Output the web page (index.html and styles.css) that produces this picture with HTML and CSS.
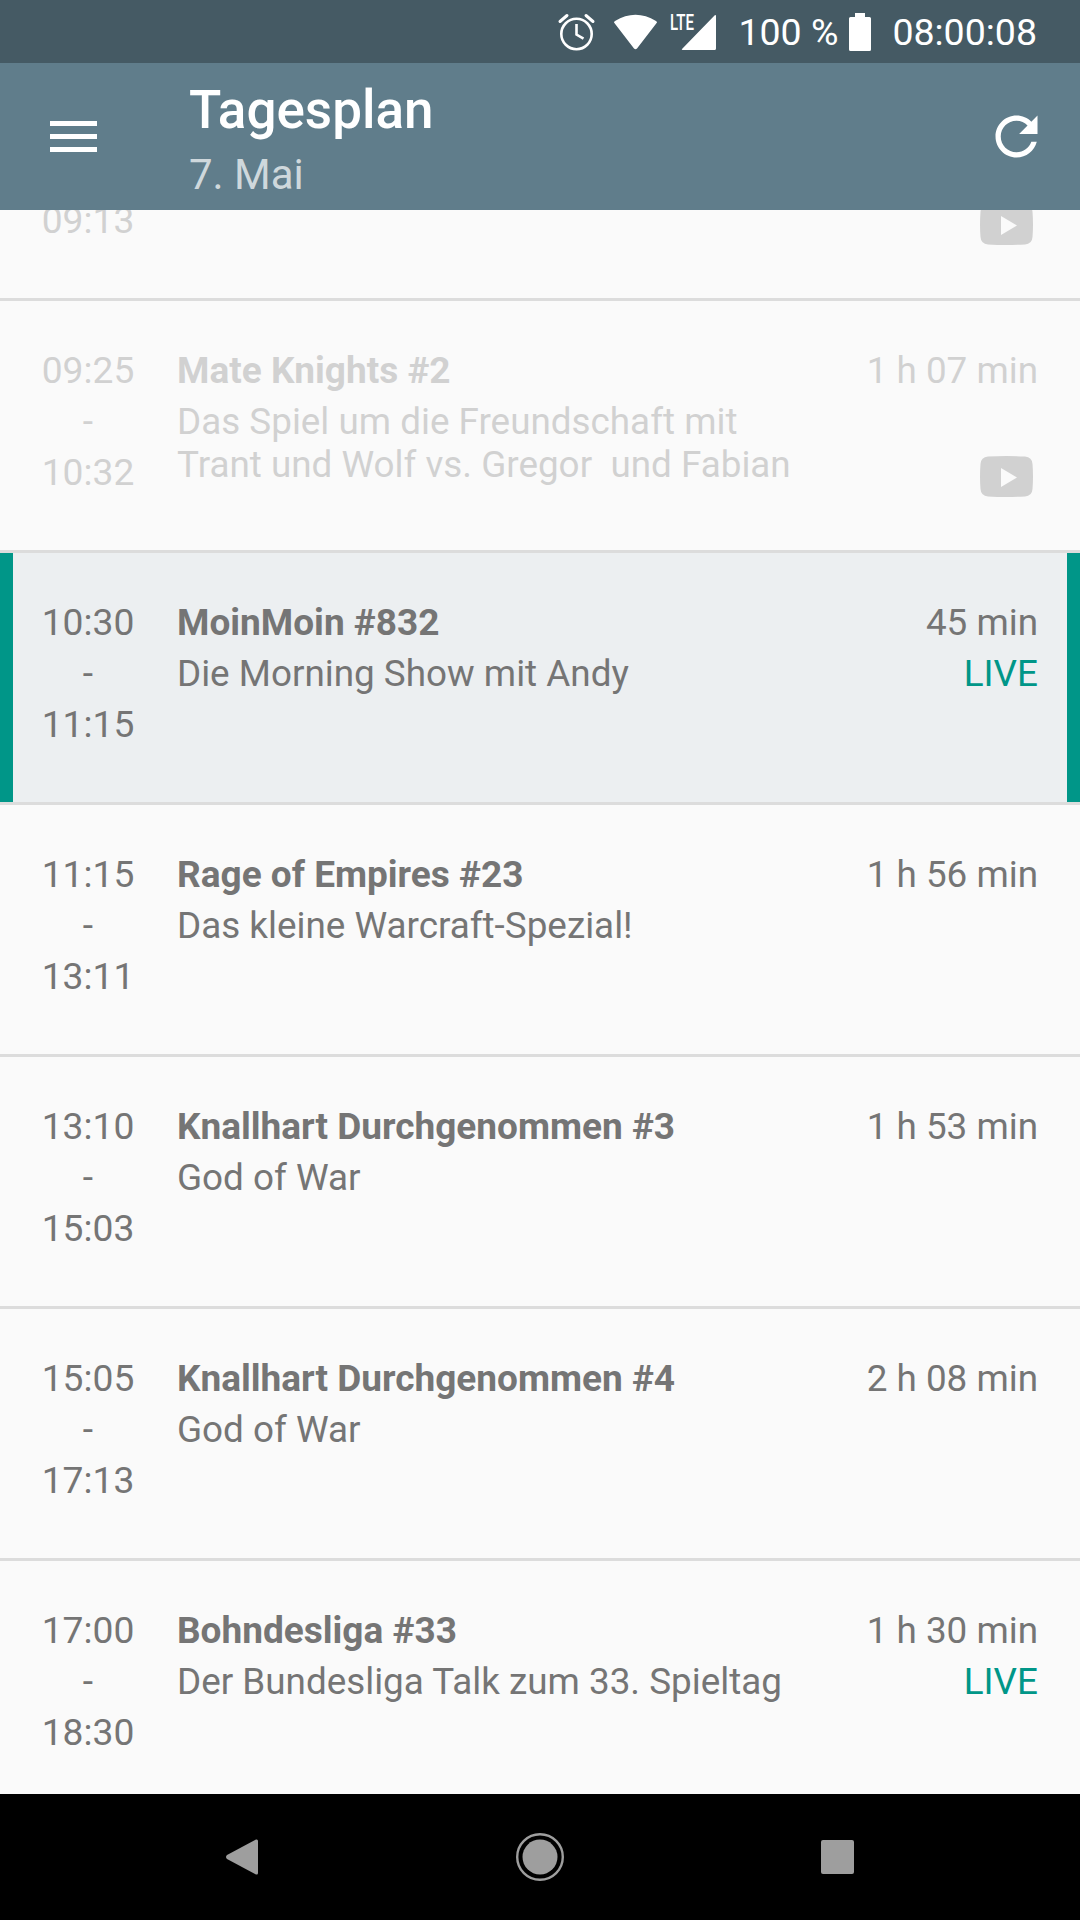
FILE: index.html
```html
<!DOCTYPE html>
<html lang="de">
<head>
  <meta charset="UTF-8">
  <meta name="viewport" content="width=device-width, initial-scale=1.0">
  <title>Tagesplan</title>
  <link rel="stylesheet" href="styles.css">
</head>
<body>
<div class="screen">
  <!-- status bar -->
  <div class="statusbar">
    <svg class="ic-alarm" width="37" height="38" viewBox="0 0 37 38">
      <circle cx="18.5" cy="21" r="15.2" fill="none" stroke="#fff" stroke-width="2.6"/>
      <path d="M18.5 11v10.5l7 4.2" fill="none" stroke="#fff" stroke-width="2.6"/>
      <path d="M2 8.5 9 2.5M35 8.5 28 2.5" fill="none" stroke="#fff" stroke-width="3" stroke-linecap="round"/>
    </svg>
    <svg class="ic-wifi" width="45" height="37" viewBox="0 0 45 37">
      <path d="M1 9.500Q1 8.500 2 8 22.500-4.500 43 8 44 8.500 44 9.500L24 35.500Q22.500 37 21 35.500Z" fill="#fff"/>
    </svg>
    <svg class="ic-signal" width="46" height="37" viewBox="0 0 46 37">
      <text class="lte" x="0" y="17" textLength="24" lengthAdjust="spacingAndGlyphs">LTE</text>
      <path d="M12 36 44.500 2.500Q46 1.500 46 3V35.500Q46 37 44.500 37H13Q11 37 12 36Z" fill="#fff"/>
    </svg>
    <span class="batt-text">100 %</span>
    <svg class="ic-batt" width="22" height="38" viewBox="0 0 22 38">
      <path d="M6 0h10v4h4.500Q22 4 22 5.500V36.500Q22 38 20.500 38H1.500Q0 38 0 36.500V5.500Q0 4 1.500 4H6Z" fill="#fff"/>
    </svg>
    <span class="clock">08:00:08</span>
  </div>

  <!-- app bar -->
  <header class="appbar">
    <div class="burger"><i></i><i></i><i></i></div>
    <div class="appbar-text">
      <h1>Tagesplan</h1>
      <p>7. Mai</p>
    </div>
    <svg class="ic-refresh" width="63" height="63" viewBox="0 0 24 24">
      <path fill="#fff" d="M17.65 6.35C16.2 4.9 14.21 4 12 4c-4.42 0-7.99 3.58-7.99 8s3.57 8 7.99 8c3.73 0 6.84-2.55 7.73-6h-2.08c-.82 2.33-3.04 4-5.65 4-3.31 0-6-2.69-6-6s2.69-6 6-6c1.66 0 3.14.69 4.22 1.78L13 11h7V4l-2.35 2.35z"/>
    </svg>
  </header>

  <!-- Sendungen -->
  <main class="list-wrap">
    <div class="list">
      <div class="row past first">
        <div class="times"><span>09:13</span></div>
        <div class="info"></div>
        <div class="side">
          <svg class="ic-play" width="53" height="41" viewBox="0 0 53 41"><path fill-rule="evenodd" d="M8 0.500Q26.500-.5 45 .5 52 1 52.500 8 53.500 20.500 52.500 33 52 40 45 40.500 26.500 41.500 8 40.500 1 40 .5 33-.5 20.500 .5 8 1 1 8 .5ZM21 12V31L37 21.500Z" fill="#757575"/></svg>
        </div>
      </div>

      <div class="row past">
        <div class="times"><span>09:25</span><span>-</span><span>10:32</span></div>
        <div class="info">
          <h2>Mate Knights #2</h2>
          <p>Das Spiel um die Freundschaft mit<br>Trant und Wolf vs. Gregor &nbsp;und Fabian</p>
        </div>
        <div class="side">
          <span>1 h 07 min</span>
          <svg class="ic-play" width="53" height="41" viewBox="0 0 53 41"><path fill-rule="evenodd" d="M8 0.500Q26.500-.5 45 .5 52 1 52.500 8 53.500 20.500 52.500 33 52 40 45 40.500 26.500 41.500 8 40.500 1 40 .5 33-.5 20.500 .5 8 1 1 8 .5ZM21 12V31L37 21.500Z" fill="#757575"/></svg>
        </div>
      </div>

      <div class="row current">
        <div class="times"><span>10:30</span><span>-</span><span>11:15</span></div>
        <div class="info">
          <h2>MoinMoin #832</h2>
          <p>Die Morning Show mit Andy</p>
        </div>
        <div class="side">
          <span>45 min</span>
          <span class="live">LIVE</span>
        </div>
      </div>

      <div class="row">
        <div class="times"><span>11:15</span><span>-</span><span>13:11</span></div>
        <div class="info">
          <h2>Rage of Empires #23</h2>
          <p>Das kleine Warcraft-Spezial!</p>
        </div>
        <div class="side"><span>1 h 56 min</span></div>
      </div>

      <div class="row">
        <div class="times"><span>13:10</span><span>-</span><span>15:03</span></div>
        <div class="info">
          <h2>Knallhart Durchgenommen #3</h2>
          <p>God of War</p>
        </div>
        <div class="side"><span>1 h 53 min</span></div>
      </div>

      <div class="row">
        <div class="times"><span>15:05</span><span>-</span><span>17:13</span></div>
        <div class="info">
          <h2>Knallhart Durchgenommen #4</h2>
          <p>God of War</p>
        </div>
        <div class="side"><span>2 h 08 min</span></div>
      </div>

      <div class="row">
        <div class="times"><span>17:00</span><span>-</span><span>18:30</span></div>
        <div class="info">
          <h2>Bohndesliga #33</h2>
          <p>Der Bundesliga Talk zum 33. Spieltag</p>
        </div>
        <div class="side">
          <span>1 h 30 min</span>
          <span class="live">LIVE</span>
        </div>
      </div>
    </div>
  </main>

  <!-- android nav -->
  <nav class="navbar">
    <svg width="33" height="36" viewBox="0 0 33 36"><path d="M1 16 30 .5Q32 0 32 2V34Q32 36 30 35.500L1 20Q-1 18 1 16Z" fill="#9e9e9e"/></svg>
    <svg width="48" height="48" viewBox="0 0 48 48"><circle cx="24" cy="24" r="22.800" fill="none" stroke="#9e9e9e" stroke-width="2.400"/><circle cx="24" cy="24" r="17.500" fill="#9e9e9e"/></svg>
    <div class="recent"></div>
  </nav>
</div>
</body>
</html>
```

FILE: styles.css
```css
html,
body {
  margin: 0;
  padding: 0;
  overflow: hidden;
}

body {
  background: #fafafa;
  color: #757575;
  font: 36.85px/51px Roboto, "Liberation Sans", sans-serif;
}

h1,
h2,
p {
  margin: 0;
  padding: 0;
}

.screen {
  width: 1080px;
  height: 1920px;
  display: flex;
  flex-direction: column;
}

/* status bar */
.statusbar {
  height: 63px;
  flex: none;
  background: #455a64;
  color: #fff;
  display: flex;
  justify-content: flex-end;
  align-items: center;
  padding-right: 43px;
  font-size: 37.5px;
}

.statusbar svg {
  flex: none;
  overflow: visible;
}

.statusbar span {
  padding-top: 2px;
}

.ic-alarm {
  margin-right: 18px;
}

.ic-wifi {
  margin-right: 12px;
}

.lte {
  fill: #fff;
  font: 500 22.5px Roboto, sans-serif;
}

.batt-text {
  margin: 0 11px 0 22px;
}

.clock {
  margin-left: 21px;
}

/* app bar */
.appbar {
  height: 147px;
  flex: none;
  background: #607d8b;
  display: flex;
  align-items: center;
  color: #fff;
  position: relative;
  z-index: 1;
}

.burger {
  width: 47px;
  margin-left: 50px;
  display: flex;
  flex-direction: column;
  gap: 8px;
}

.burger i {
  display: block;
  height: 5px;
  background: #fff;
}

.appbar-text {
  flex: 1;
  margin-left: 92px;
  padding-top: 6px;
}

.appbar-text h1 {
  font-size: 53px;
  line-height: 60px;
  font-weight: 500;
}

.appbar-text p {
  font-size: 42px;
  line-height: 50px;
  margin-top: 10px;
  color: #cfd8dc;
}

.ic-refresh {
  margin-right: 32px;
}

/* list */
.list-wrap {
  flex: 1;
  overflow: hidden;
}

.list {
  margin-top: -161px;
}

.row {
  box-sizing: border-box;
  height: 252px;
  border-bottom: 3px solid #dcdcdc;
  padding: 44px 42px 0 43px;
  display: flex;
}

.times {
  width: 90px;
  flex: none;
  display: flex;
  flex-direction: column;
  align-items: center;
  font-size: 37.2px;
}

/* top row is scrolled under the app bar, only its end time shows */
.first .times {
  padding-top: 102px;
}

.info {
  flex: 1;
  margin-left: 44px;
}

.info h2 {
  font-size: 37px;
  line-height: 51px;
  font-weight: 700;
}

.info p {
  margin-top: 4px;
  line-height: 43px;
}

.side {
  display: flex;
  flex-direction: column;
  align-items: flex-end;
}

.live {
  color: #009688;
}

.ic-play {
  display: block;
  margin: 60px 5px 0 0;
}

.past .times,
.past .info,
.past .side {
  opacity: 0.3;
}

.past .side .ic-play:first-child {
  margin-top: 111px;
}

.current {
  background: #eceff1;
  box-shadow: inset 13px 0 0 #009688, inset -13px 0 0 #009688;
}

/* android nav */
.navbar {
  height: 126px;
  flex: none;
  background: #000;
  display: flex;
  justify-content: center;
  align-items: center;
  gap: 257px;
}

.recent {
  width: 33px;
  height: 34px;
  border-radius: 2px;
  background: #9e9e9e;
}
```
